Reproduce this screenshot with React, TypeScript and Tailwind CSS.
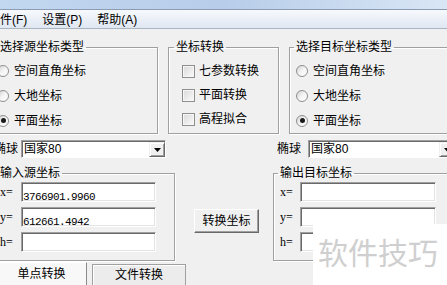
import type { ReactNode } from 'react';

const sans = "font-['Liberation_Sans','Noto_Sans_CJK_SC',sans-serif]";

function Radio({ on }: { on?: boolean }) {
  return (
    <span className="flex h-[12px] w-[12px] shrink-0 items-center justify-center rounded-full border border-[#8e8f8f] bg-gradient-to-br from-[#d2d2d2] via-[#f4f4f4] to-white">
      {on && <span className="h-[5px] w-[5px] rounded-full bg-[#1a1a1a]" />}
    </span>
  );
}

function Check() {
  return (
    <span className="h-[13px] w-[13px] shrink-0 border border-[#8e8f8f] bg-gradient-to-br from-[#d9d9d9] to-[#fbfbfb] shadow-[inset_0_0_0_1px_#f6f6f6]" />
  );
}

function Group({ title, className, legendClass, children }: { title: string; className: string; legendClass: string; children: ReactNode }) {
  return (
    <fieldset className={`border border-[#a0a0a0] shadow-[inset_1px_1px_0_white,1px_1px_0_white] ${className}`}>
      <legend className={`px-[2px] text-[12px] leading-[16px] ${legendClass}`}>{title}</legend>
      {children}
    </fieldset>
  );
}

function Combo({ w }: { w: string }) {
  return (
    <div className={`flex h-[18px] shrink-0 border border-t-[#a0a0a0] border-l-[#a0a0a0] border-r-white border-b-white bg-white shadow-[inset_1px_1px_0_#696969] ${w}`}>
      <span className="flex-1 pl-[2px] pt-[1px] text-[12px] leading-[15px]">国家80</span>
      <span className="mt-[1px] flex w-[16px] items-center justify-center border border-t-[#f0f0f0] border-l-[#f0f0f0] border-r-[#696969] border-b-[#696969] bg-[#f0f0f0] shadow-[inset_1px_1px_0_white,inset_-1px_-1px_0_#a0a0a0]">
        <svg width="7" height="4" viewBox="0 0 7 4">
          <path d="M0 0h7L3.5 4z" fill="#000" />
        </svg>
      </span>
    </div>
  );
}

function Field({ label, value, labelW, w }: { label: string; value?: string; labelW: string; w: string }) {
  return (
    <div className="flex items-center">
      <span className={`font-['Liberation_Serif',serif] text-[12px] leading-[14px] ${labelW}`}>{label}</span>
      <div className={`h-[20px] border border-t-[#a0a0a0] border-l-[#a0a0a0] border-r-white border-b-white bg-white pl-[1px] shadow-[inset_1px_1px_0_#696969,inset_-1px_-1px_0_#e3e3e3] ${w}`}>
        <span className="font-['Liberation_Mono',monospace] text-[11px] leading-[18px] tracking-[-0.6px]">{value}</span>
      </div>
    </div>
  );
}

export default function App() {
  return (
    <div className={`relative h-[285px] w-[447px] overflow-hidden bg-[#f0f0f0] text-black ${sans}`}>
      {/* title bar remains */}
      <div className="h-[9px] bg-gradient-to-r from-[#c2d7f0] via-[#b7cde9] to-[#d9e6f5]" />
      <div className="h-[1px] bg-[#8a9bb3]" />
      {/* menu */}
      <div className="flex h-[18px] items-center gap-[15px] bg-gradient-to-b from-[#f7f9fc] to-[#dfe7f2] pt-[1px] text-[12px] leading-[14px]">
        <span className="ml-[-12px]">文件(F)</span>
        <span>设置(P)</span>
        <span>帮助(A)</span>
      </div>
      <div className="h-[1px] bg-[#aab5c4]" />

      {/* top groups */}
      <div className="mt-[10px] flex items-start">
        <Group title="选择源坐标类型" className="ml-[-10px] h-[95px] w-[168px] shrink-0" legendClass="ml-[7px]">
          <div className="flex flex-col pl-[6px] pt-[3px] text-[12px] leading-[14px]">
            <label className="flex h-[25px] items-center gap-[5px]"><Radio />空间直角坐标</label>
            <label className="flex h-[25px] items-center gap-[5px]"><Radio />大地坐标</label>
            <label className="flex h-[25px] items-center gap-[5px]"><Radio on />平面坐标</label>
          </div>
        </Group>
        <Group title="坐标转换" className="ml-[10px] h-[95px] w-[111px] shrink-0" legendClass="ml-[5px]">
          <div className="flex flex-col pl-[13px] pt-[4px] text-[12px] leading-[14px]">
            <label className="flex h-[24px] items-center gap-[4px]"><Check />七参数转换</label>
            <label className="flex h-[24px] items-center gap-[4px]"><Check />平面转换</label>
            <label className="flex h-[24px] items-center gap-[4px]"><Check />高程拟合</label>
          </div>
        </Group>
        <Group title="选择目标坐标类型" className="ml-[10px] h-[95px] w-[180px] shrink-0" legendClass="ml-[4px]">
          <div className="flex flex-col pl-[6px] pt-[3px] text-[12px] leading-[14px]">
            <label className="flex h-[25px] items-center gap-[5px]"><Radio />空间直角坐标</label>
            <label className="flex h-[25px] items-center gap-[5px]"><Radio />大地坐标</label>
            <label className="flex h-[25px] items-center gap-[5px]"><Radio on />平面坐标</label>
          </div>
        </Group>
      </div>

      {/* ellipsoid row */}
      <div className="mt-[6px] flex items-center text-[12px] leading-[14px]">
        <span className="ml-[-6px] shrink-0">椭球</span>
        <div className="ml-[3px]"><Combo w="w-[145px]" /></div>
        <span className="ml-[111px] shrink-0">椭球</span>
        <div className="ml-[7px]"><Combo w="w-[148px]" /></div>
      </div>

      {/* coordinate groups */}
      <div className="mt-[7px] flex items-start">
        <Group title="输入源坐标" className="ml-[-6px] h-[96px] w-[181px] shrink-0" legendClass="ml-[3px]">
          <div className="flex flex-col gap-[5px] pl-[5px] pt-[1px]">
            <Field label="x=" value="3766901.9960" labelW="w-[21px]" w="w-[135px]" />
            <Field label="y=" value="612661.4942" labelW="w-[21px]" w="w-[135px]" />
            <Field label="h=" labelW="w-[21px]" w="w-[135px]" />
          </div>
        </Group>
        <button className="ml-[19px] mt-[44px] h-[24px] w-[65px] shrink-0 border border-t-white border-l-white border-r-[#696969] border-b-[#696969] bg-[#f0f0f0] text-[12px] leading-[14px] shadow-[inset_-1px_-1px_0_#a0a0a0]">
          转换坐标
        </button>
        <Group title="输出目标坐标" className="ml-[14px] h-[96px] w-[185px] shrink-0" legendClass="ml-[4px]">
          <div className="flex flex-col gap-[5px] pl-[6px] pt-[1px]">
            <Field label="x=" labelW="w-[20px]" w="w-[136px]" />
            <Field label="y=" labelW="w-[20px]" w="w-[136px]" />
            <Field label="h=" labelW="w-[20px]" w="w-[136px]" />
          </div>
        </Group>
      </div>

      {/* tabs */}
      <div className="mt-[1px] flex items-start text-[12px] leading-[14px]">
        <div className="ml-[-4px] flex h-[24px] w-[91px] items-center justify-center border border-t-white border-l-white border-r-[#8a8a8a] border-b-0 bg-[#f8f8f8] pb-[2px]">
          单点转换
        </div>
        <div className="ml-[5px] mt-[2px] flex h-[22px] w-[94px] items-center justify-center border border-[#a0a0a0] border-b-0 bg-[#ececec] shadow-[inset_1px_1px_0_white] pb-[2px]">
          文件转换
        </div>
      </div>

      {/* watermark */}
      <div className="absolute left-[313px] top-[224px] h-[61px] w-[134px] bg-white pl-[5px] pt-[9px]">
        <span className="font-['Noto_Sans_CJK_SC',sans-serif] text-[30px] leading-[36px] text-[#cfcfcf]">软件技巧</span>
      </div>
    </div>
  );
}
